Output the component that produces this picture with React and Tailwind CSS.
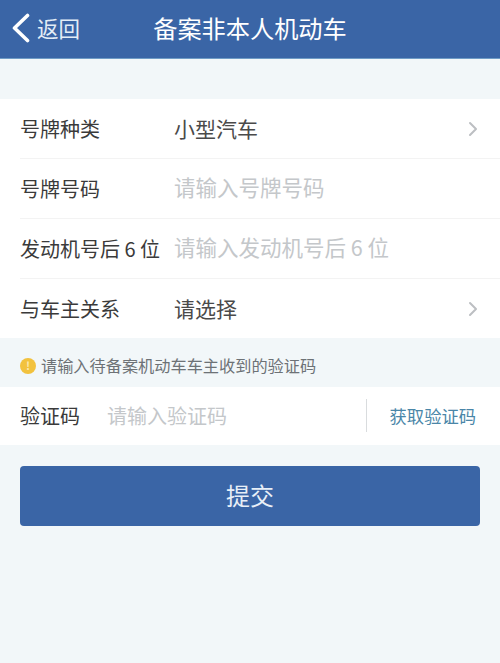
import { ChevronRight } from 'lucide-react';

const rows = [
  { label: '号牌种类', value: '小型汽车', arrow: true },
  { label: '号牌号码', placeholder: '请输入号牌号码' },
  { label: '发动机号后 6 位', placeholder: '请输入发动机号后 6 位' },
  { label: '与车主关系', value: '请选择', arrow: true },
];

const App = () => {
  return (
    <div className="flex h-[663px] w-[500px] flex-col overflow-hidden bg-[#f2f7f9] font-['Noto_Sans_CJK_SC',sans-serif] text-[#3a3a3a]">
      <header className="flex h-[59px] shrink-0 items-center justify-between border-b border-[#6f9cc6] bg-[#3a65a6] pb-[2px] pl-[11px] text-white">
        <div className="flex w-[142px] items-center gap-[6px]">
          <svg width="20" height="30" viewBox="0 0 20 30" fill="none" stroke="currentColor" strokeWidth="3.6" strokeLinecap="round" strokeLinejoin="round">
            <path d="M16.5 2.5 3.5 15l13 12.500" />
          </svg>
          <span className="text-[21.500px] text-[#e3edf6]">返回</span>
        </div>
        <h1 className="text-[24.200px] font-normal">备案非本人机动车</h1>
        <div className="w-[153px]" />
      </header>

      <section className="mt-[40px] bg-white">
        {rows.map((row, i) => (
          <div key={row.label} className="flex h-[59px] items-center pl-[20px] pr-[20px]">
            <span className="w-[154px] shrink-0 whitespace-nowrap text-[20px]">{row.label}</span>
            <span className={row.value ? 'flex-1 whitespace-pre text-[21px] text-[#4a4a4a]' : 'mb-[3px] flex-1 whitespace-pre text-[21.500px] text-[#c4c7ca]'}>
              {row.value || row.placeholder}
            </span>
            {row.arrow && <ChevronRight size={24} strokeWidth={2} className="mr-[-5px] text-[#bcbfc2]" />}
          </div>
        )).flatMap((el, i) => (i === 0 ? [el] : [<div key={i} className="ml-[20px] h-px bg-[#f3f3f3]" />, el]))}
      </section>

      <div className="flex h-[49px] shrink-0 items-center gap-[5px] pl-[20px] pt-[6px]">
        <span className="flex size-[16px] items-center justify-center rounded-full bg-[#f2c23e] text-[11px] font-bold leading-none text-[#fbe9b0]">!</span>
        <span className="text-[16.200px] text-[#6d7276]">请输入待备案机动车车主收到的验证码</span>
      </div>

      <section className="flex h-[58px] shrink-0 items-center bg-white pb-[1px] pl-[20px] pr-[24px]">
        <span className="w-[87px] shrink-0 text-[20px]">验证码</span>
        <span className="flex-1 text-[20px] text-[#c4c7ca]">请输入验证码</span>
        <div className="flex h-[33px] items-center border-l border-[#d9dcde] pl-[23px]">
          <span className="text-[17.300px] text-[#4a86a8]">获取验证码</span>
        </div>
      </section>

      <button type="button" className="mx-[20px] mt-[21px] h-[60px] rounded-[4px] bg-[#3a65a6] pb-[2px] text-[24px] text-[#e8eff7]">
        提交
      </button>
    </div>
  );
};

export default App;
